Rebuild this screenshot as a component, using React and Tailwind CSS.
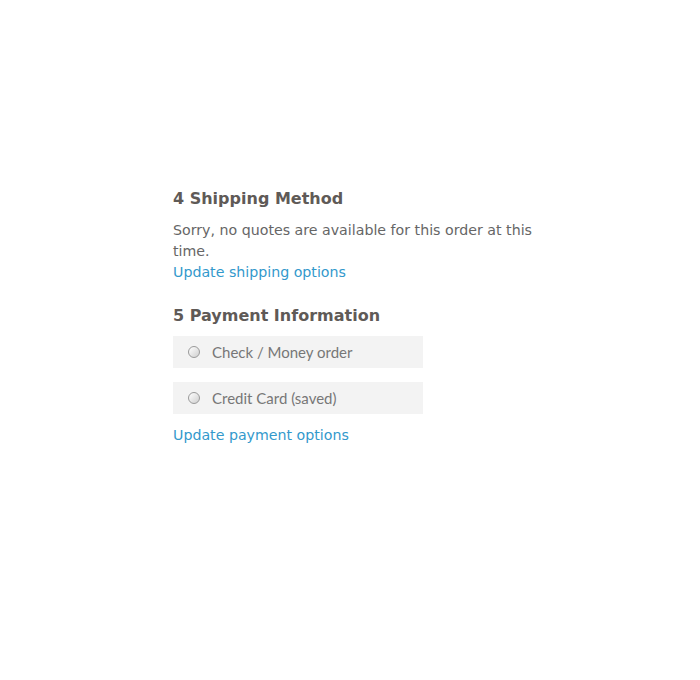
export default function App() {
    const options = ['Check / Money order', 'Credit Card (saved)'];

    return (
        <div className="min-h-[680px] w-[700px] bg-white pt-[188px] pl-[173px]" style={{ fontFamily: '"DejaVu Sans", Verdana, sans-serif' }}>
            <div className="w-[375px] text-[#666]">
                {/* Shipping */}
                <h2 className="text-[16px] font-bold leading-[22px] text-[#5f5a57]">4 Shipping Method</h2>
                <p className="mt-[10px] text-[14.2px] leading-[21px]">
                    Sorry, no quotes are available for this order at this time.
                </p>
                <a href="#" className="block text-[14.2px] leading-[21px] text-[#3399cc]">
                    Update shipping options
                </a>

                {/* Payment */}
                <h2 className="mt-[22px] text-[16px] font-bold leading-[22px] text-[#5f5a57]">5 Payment Information</h2>
                <div className="mt-[9px] flex flex-col gap-[14px]">
                    {options.map((o) => (
                        <label key={o} className="flex h-[32px] w-[250px] items-center bg-[#f3f3f3] pl-[15px]">
                            <span className="h-[12px] w-[12px] rounded-full border border-[#9a9a9a] bg-gradient-to-br from-[#ffffff] to-[#cfcfcf]" />
                            <span className="ml-[12px] text-[15px] text-[#777]" style={{ fontFamily: 'Lato, "Open Sans", sans-serif' }}>
                                {o}
                            </span>
                        </label>
                    ))}
                </div>
                <a href="#" className="mt-[11px] block text-[14.2px] leading-[21px] text-[#3399cc]">
                    Update payment options
                </a>
            </div>
        </div>
    );
}
